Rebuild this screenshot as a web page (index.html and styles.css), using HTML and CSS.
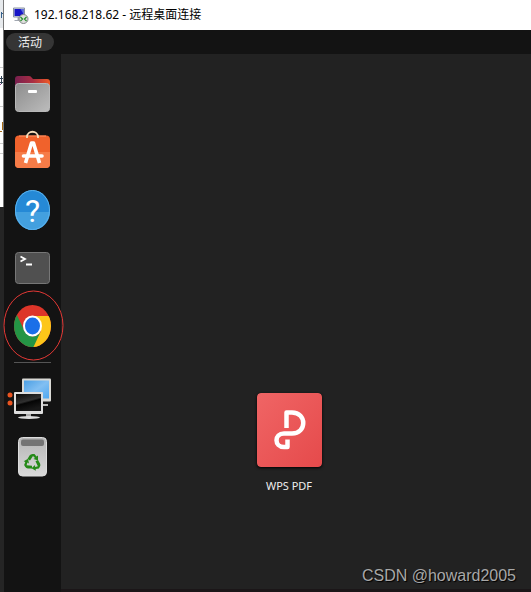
FILE: index.html
```html
<!DOCTYPE html>
<html lang="zh-CN">
<head>
<meta charset="utf-8">
<title>192.168.218.62 - 远程桌面连接</title>
<link rel="stylesheet" href="styles.css">
</head>
<body>
<aside class="behind" aria-hidden="true">
  <svg class="behind-page" viewBox="0 0 4 207">
    <path d="M0 0h4v207H0z" fill="#fff"/>
    <path d="M0 0h4v28H0z" fill="#e7eaed"/>
    <path d="M0 67.500h4M0 106.500h4M0 143.500h4M0 153.500h4" stroke="#ccc"/>
    <path d="M1.500 12v6M1.500 13.500H3" fill="none" stroke="#35618c"/>
    <path d="M0 78.500h3M0 82.500h3M1.500 76v8" stroke="#345"/>
    <path d="M0 84.500h1" stroke="#904090"/>
    <path d="M2.500 122v8M0 131.500h2" stroke="#a66b16"/>
    <path d="M3.500 0v207" stroke="#777"/>
  </svg>
</aside>
<main class="window">
  <header class="titlebar">
    <svg class="app-icon" viewBox="0 0 16 17">
      <path d="M1 1h11v9H1z" fill="#d7dce4" stroke="#8992a3"/>
      <path d="M2 2h9v7H2z" fill="#1715c7"/>
      <path d="M8 2h3v5z" fill="#5c6ddd"/>
      <path d="M5 10h3v2h2v2H2v-1h3z" fill="#a2a8b1"/>
      <circle cx="11" cy="12" r="4.500" fill="#dedfdd" stroke="#85888a"/>
      <path d="M8 10l2 2-2 2M14 10l-2 2 2 2" fill="none" stroke="#27902e" stroke-width="1.300"/>
    </svg>
    <h1 class="title">192.168.218.62 - 远程桌面连接</h1>
  </header>
  <nav class="topbar"><button class="activities" type="button">活动</button></nav>
  <div class="workspace">
    <nav class="dock">
      <button class="launcher" type="button" aria-label="文件">
        <svg viewBox="0 0 57 58">
          <defs>
            <linearGradient id="folder"><stop stop-color="#77204f"/><stop offset=".5" stop-color="#a82d43"/><stop offset="1" stop-color="#f05a27"/></linearGradient>
            <linearGradient id="folderFront" x2="1" y2="1"><stop stop-color="#8d8d8d"/><stop offset="1" stop-color="#bcbcbc"/></linearGradient>
          </defs>
          <path d="M14 11h11q2 0 3 2l1 1h14q3 0 3 3v12H11V14q0-3 3-3z" fill="url(#folder)"/>
          <rect x="11.500" y="18.500" width="34" height="28" rx="3" fill="url(#folderFront)" stroke="#b8b8b8"/>
          <rect x="24" y="25" width="9" height="3" rx="1" fill="#fff"/>
        </svg>
      </button>
      <button class="launcher" type="button" aria-label="软件">
        <svg viewBox="0 0 57 58">
          <rect x="11" y="12.500" width="35" height="32.500" rx="4" fill="#f0622c"/>
          <path d="M11 29h35v12q0 4-4 4H15q-4 0-4-4z" fill="#f67c48"/>
          <path d="M15 13h27" stroke="#ff9569"/>
          <path d="M23 15v-1c0-7 11-7 11 0v1" fill="none" stroke="#f6dfbd" stroke-width="1.800"/>
          <path d="M21.500 40l6-20h2l6 20" fill="none" stroke="#fff" stroke-width="3.600" stroke-linejoin="round"/>
          <path d="M19.500 33h18.500" stroke="#fff" stroke-width="3.600" stroke-linecap="round"/>
        </svg>
      </button>
      <button class="launcher" type="button" aria-label="帮助">
        <svg viewBox="0 0 57 58">
          <ellipse cx="28.500" cy="29" rx="17.500" ry="20" fill="#2589d6"/>
          <path d="M11 31h35c0 10-8 18-17.500 18S11 41 11 31z" fill="#43a0df"/>
          <ellipse cx="28.500" cy="29" rx="17" ry="19.500" fill="none" stroke="#5bb2ed"/>
          <text class="help-mark" x="28.500" y="41" text-anchor="middle">?</text>
        </svg>
      </button>
      <button class="launcher" type="button" aria-label="终端">
        <svg viewBox="0 0 57 58">
          <rect x="11.500" y="13.500" width="34" height="31" rx="3" fill="#505050" stroke="#777"/>
          <path d="M16.500 17.500l4.500 2.500-4.500 2.500M22 25.500h6" fill="none" stroke="#fff" stroke-width="1.800"/>
        </svg>
      </button>
      <button class="launcher" type="button" aria-label="Chrome">
        <svg viewBox="0 0 57 58">
          <defs><clipPath id="disc"><ellipse cx="28.500" cy="29" rx="18.500" ry="21"/></clipPath></defs>
          <g clip-path="url(#disc)">
            <path d="M8 6h42v45H8z" fill="#dd3529"/>
            <path d="M28 19h22v34H26l11-19z" fill="#fdc619"/>
            <path d="M12 16l8.500 18c4 7 12 7 16 1L29 51H8V18z" fill="#249545"/>
          </g>
          <ellipse cx="28.500" cy="29" rx="9.500" ry="10.500" fill="#fff"/>
          <ellipse cx="28.500" cy="29" rx="7.500" ry="8.500" fill="#1a6fe8"/>
        </svg>
        <svg class="annotation" viewBox="0 0 61 72"><ellipse cx="30.500" cy="35.500" rx="29.500" ry="34.500" fill="none" stroke="#e43835"/></svg>
      </button>
      <hr class="divider">
      <button class="launcher" type="button" aria-label="远程桌面">
        <svg viewBox="0 0 57 58">
          <defs>
            <linearGradient id="sky" x2="1" y2="1"><stop stop-color="#4b9fe4"/><stop offset=".5" stop-color="#82bff2"/><stop offset="1" stop-color="#4ea8f1"/></linearGradient>
            <linearGradient id="dark" x1="0" y1="0" x2=".4" y2="1"><stop stop-color="#080808"/><stop offset=".5" stop-color="#303030"/><stop offset=".6" stop-color="#050505"/><stop offset="1" stop-color="#181818"/></linearGradient>
          </defs>
          <path d="M31 32h7v3h6v2H31z" fill="#bbb"/>
          <rect x="18" y="9.500" width="29" height="23" rx="1" fill="#d9d9d5"/>
          <rect x="20" y="11.500" width="25" height="18" fill="url(#sky)"/>
          <rect x="10" y="23" width="29" height="22" rx="1" fill="#ddd"/>
          <rect x="12" y="25" width="25" height="17" fill="url(#dark)"/>
          <path d="M22 45h5v3h-5z" fill="#aaa"/>
          <ellipse cx="25" cy="48.500" rx="11" ry="1.500" fill="#ddd"/>
          <circle cx="6" cy="26" r="2.500" fill="#e95420"/>
          <circle cx="6" cy="34" r="2.500" fill="#e95420"/>
        </svg>
      </button>
      <button class="launcher" type="button" aria-label="回收站">
        <svg viewBox="0 0 57 58">
          <defs><linearGradient id="bin" x2="0" y2="1"><stop stop-color="#b5b5b5"/><stop offset="1" stop-color="#dadada"/></linearGradient></defs>
          <rect x="14.500" y="10.500" width="28" height="38.500" rx="4" fill="url(#bin)" stroke="#ddd"/>
          <rect x="17" y="12.500" width="23" height="6.500" rx="2" fill="#747474"/>
          <g transform="translate(28.500 35.500)" fill="#258a18">
            <path id="arrow" d="M-5-3.500l2-3.500q1-1.500 3-1.500h2l2 2.500 1.500-1v5L1-3.500l1.500-1L.5-6.500l-3 4.500z"/>
            <use href="#arrow" transform="rotate(120)"/>
            <use href="#arrow" transform="rotate(240)"/>
          </g>
        </svg>
      </button>
    </nav>
    <section class="desktop">
      <button class="shortcut" type="button">
        <svg class="shortcut-icon" viewBox="0 0 65 74">
          <defs><linearGradient id="wps" x2="1" y2="1"><stop stop-color="#f06565"/><stop offset="1" stop-color="#e54a4b"/></linearGradient></defs>
          <rect width="65" height="74" rx="4" fill="url(#wps)"/>
          <path d="M29.500 35V19.500H35c15 0 15 21 0 21h-8c-10 0-10 13.500 0 13.500h3.500v-7.500" fill="none" stroke="#fff" stroke-width="4.500" stroke-linejoin="round"/>
        </svg>
        <span class="shortcut-name">WPS PDF</span>
      </button>
      <p class="watermark">CSDN @howard2005</p>
    </section>
  </div>
</main>
</body>
</html>
```
FILE: styles.css
```css
* { box-sizing: border-box; }
body {
  margin: 0;
  min-height: 100vh;
  display: grid;
  grid-template-columns: 4px minmax(0, 1fr);
  background: #222;
  font-family: "Noto Sans", "Noto Sans CJK SC", sans-serif;
  font-size: 12px;
  line-height: 16px;
}
button { padding: 0; border: 0; background: none; color: inherit; font: inherit; }
svg { display: block; }
.behind { overflow: hidden; background: #252525; }
.behind-page { width: 100%; }
.window { display: flex; flex-direction: column; min-width: 0; }
.titlebar {
  display: flex;
  align-items: center;
  gap: 5px;
  height: 30px;
  padding: 0 8px;
  background: #fff;
  color: #000;
}
.app-icon { width: 17px; height: 17px; }
.title { margin: 0; font-size: 12px; font-weight: 400; }
.topbar { height: 24px; padding: 3px 2px; background: #131313; }
.activities {
  display: block;
  height: 18px;
  padding: 2px 12px 0;
  border-radius: 9px;
  background: #353535;
  color: #eee;
}
.workspace { display: flex; flex: 1; }
.dock { flex: none; width: 57px; padding-top: 11px; background: #131313; }
.launcher { position: relative; display: block; width: 100%; }
.launcher > svg { width: 100%; }
.launcher > .annotation { position: absolute; top: -7px; left: -1px; width: 61px; }
.help-mark { fill: #fff; font-family: Roboto, sans-serif; font-size: 32px; font-weight: 400; }
.divider { height: 1px; margin: 7px 10px 6px; border: 0; background: #555; }
.desktop {
  display: flex;
  flex: 1;
  flex-direction: column;
  justify-content: flex-end;
  border-bottom: 3px solid #1b1618;
}
.shortcut {
  align-self: center;
  display: flex;
  flex-direction: column;
  align-items: center;
  gap: 11px;
  margin: 0 14px 72px 0;
  color: #eee;
}
.shortcut-icon { width: 65px; border-radius: 4px; box-shadow: 0 1px 3px #000; }
.shortcut-name { font-size: 11px; }
.watermark {
  margin: 0 15px 3px;
  color: #a8a8a8;
  font: 16px/20px "Liberation Sans", sans-serif;
  text-align: right;
  text-shadow: 1px 1px 1px #000;
}
```
